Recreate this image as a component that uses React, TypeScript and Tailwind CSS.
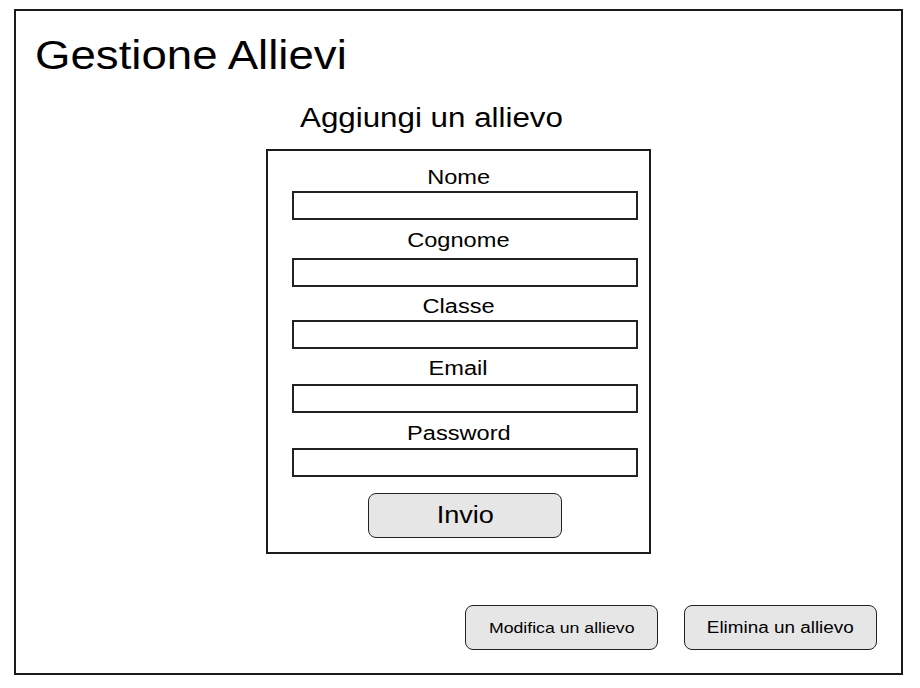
const fields = [
  { label: 'Nome', labelGap: 'mt-[14px]', inputGap: 'mt-[2px]' },
  { label: 'Cognome', labelGap: 'mt-[8px]', inputGap: 'mt-[6px]' },
  { label: 'Classe', labelGap: 'mt-[7px]', inputGap: 'mt-[2px]' },
  { label: 'Email', labelGap: 'mt-[7px]', inputGap: 'mt-[4px]' },
  { label: 'Password', labelGap: 'mt-[8px]', inputGap: 'mt-[3px]' },
]

export default function App() {
  return (
    <div className="h-[688px] w-[920px] bg-white pl-[14px] pt-[9px] font-['Liberation_Sans',Arial,sans-serif] text-black">
      <div className="flex h-[666px] w-[889px] flex-col border-2 border-[#1a1a1a]">
        <h1 className="pl-[19px] pt-[25px] text-[40px] leading-[38px]">
          <span className="inline-block origin-left scale-x-[1.14]">Gestione Allievi</span>
        </h1>

        <h2 className="mt-[31px] pl-[284px] text-[27px] leading-[27px]">
          <span className="inline-block origin-left scale-x-[1.16]">Aggiungi un allievo</span>
        </h2>

        <form
          className="ml-[250px] mt-[17px] h-[405px] w-[385px] border-2 border-[#1c1c1c]"
          onSubmit={(e) => e.preventDefault()}
        >
          {fields.map((f) => (
            <div key={f.label}>
              <div className={`${f.labelGap} text-center text-[20px] leading-[24px]`}>
                <span className="inline-block scale-x-[1.18]">{f.label}</span>
              </div>
              <div className={`${f.inputGap} pl-[24px]`}>
                <input
                  type={f.label === 'Password' ? 'password' : 'text'}
                  className="block h-[29px] w-[346px] border-2 border-[#222] bg-white outline-none"
                />
              </div>
            </div>
          ))}
          <div className="mt-[16px] flex w-[370px] justify-center pl-[24px]">
            <button
              type="submit"
              className="h-[45px] w-[194px] rounded-[8px] border-[1.5px] border-[#222] bg-[#e6e6e6] text-[23px] leading-none"
            >
              <span className="inline-block scale-x-[1.18]">Invio</span>
            </button>
          </div>
        </form>

        <div className="mt-auto flex justify-end gap-[26px] pb-[23px] pr-[24px]">
          <button
            type="button"
            className="h-[45px] w-[193px] rounded-[8px] border-[1.5px] border-[#222] bg-[#e6e6e6] text-[15px] leading-none"
          >
            <span className="inline-block scale-x-[1.18]">Modifica un allievo</span>
          </button>
          <button
            type="button"
            className="h-[45px] w-[193px] rounded-[8px] border-[1.5px] border-[#222] bg-[#e6e6e6] text-[16px] leading-none"
          >
            <span className="inline-block scale-x-[1.18]">Elimina un allievo</span>
          </button>
        </div>
      </div>
    </div>
  )
}
